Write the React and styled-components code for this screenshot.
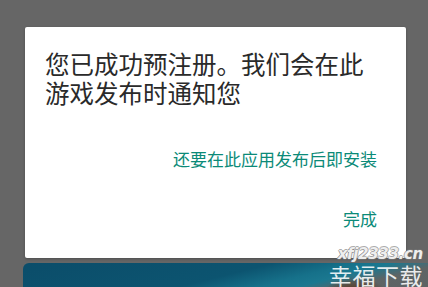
import styled, { createGlobalStyle } from "styled-components";

const GlobalStyle = createGlobalStyle`
  html, body {
    margin: 0;
    padding: 0;
    background: #666666;
  }
  body {
    font-family: "Noto Sans CJK SC", "Noto Sans", sans-serif;
  }
`;

const Screen = styled.main`
  position: relative;
  width: 428px;
  height: 287px;
  overflow: hidden;
  background: #666666;
  padding: 27px 0 0 25px;
  box-sizing: border-box;
`;

const Dialog = styled.section`
  width: 381px;
  height: 231px;
  box-sizing: border-box;
  background: #ffffff;
  border-radius: 2px;
  padding: 22px 29px 0 20px;
  display: flex;
  flex-direction: column;
  box-shadow: 0 1px 3px rgba(0, 0, 0, 0.25);
`;

const Message = styled.h2`
  margin: 0;
  font-size: 24.5px;
  font-weight: 400;
  line-height: 29px;
  color: #2a2a2a;
`;

const Actions = styled.div`
  margin-top: 42px;
  display: flex;
  flex-direction: column;
  align-items: flex-end;
  gap: 40px;
`;

const TextButton = styled.button`
  border: none;
  background: transparent;
  padding: 0;
  font-family: inherit;
  font-size: 17px;
  line-height: 20px;
  color: #0b8a78;
  cursor: pointer;
`;

const Banner = styled.div`
  margin: 5px 0 0 -2px;
  width: 420px;
  height: 60px;
  border-radius: 6px 6px 0 0;
  background:
    radial-gradient(ellipse 38px 28px at 332px 42px, #6b4b35 0%, #5c4535 65%, transparent 100%),
    linear-gradient(
      166deg,
      #0b4d6a 0%,
      #0c5470 38%,
      #16718a 50%,
      #1b7890 56%,
      #5d6465 64%,
      #606060 100%
    );
`;

const Watermark = styled.div`
  position: absolute;
  right: 5px;
  bottom: 0;
  display: flex;
  flex-direction: column;
  align-items: flex-end;
  gap: 3px;
  color: rgba(255, 255, 255, 0.88);
  pointer-events: none;
`;

const Site = styled.span`
  font-family: "DejaVu Sans", sans-serif;
  font-size: 15px;
  font-weight: 700;
  font-style: italic;
  line-height: 14px;
  letter-spacing: -0.3px;
  color: rgba(255, 255, 255, 0.9);
  text-shadow:
    1px 0 0 rgba(120, 120, 120, 0.6),
    -1px 0 0 rgba(120, 120, 120, 0.6),
    0 1px 0 rgba(120, 120, 120, 0.6),
    0 -1px 0 rgba(120, 120, 120, 0.6);
`;

const Brand = styled.span`
  font-size: 23px;
  line-height: 23px;
  letter-spacing: 0.5px;
`;

export default function App() {
  return (
    <>
      <GlobalStyle />
      <Screen>
        <Dialog>
          <Message>您已成功预注册。我们会在此游戏发布时通知您</Message>
          <Actions>
            <TextButton>还要在此应用发布后即安装</TextButton>
            <TextButton>完成</TextButton>
          </Actions>
        </Dialog>
        <Banner />
        <Watermark>
          <Site>xfj2333.cn</Site>
          <Brand>幸福下载</Brand>
        </Watermark>
      </Screen>
    </>
  );
}
